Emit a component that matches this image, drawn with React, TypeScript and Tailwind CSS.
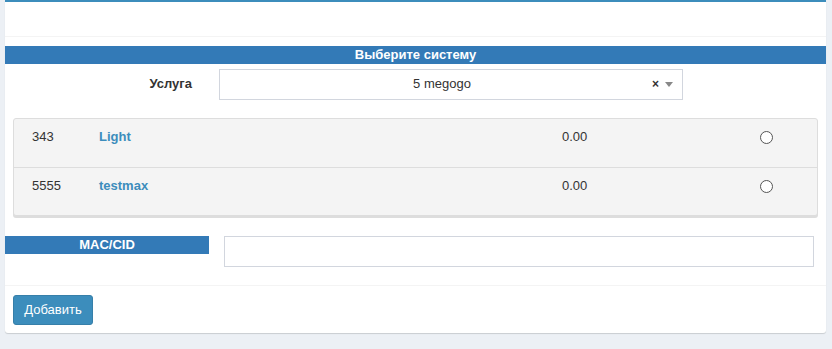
const rows = [
  { id: "343", name: "Light", price: "0.00" },
  { id: "5555", name: "testmax", price: "0.00" },
];

export default function App() {
  return (
    <div className="min-h-[349px] bg-[#ecf0f5] pl-[5px] pr-[6px] font-['Liberation_Sans',Arial,sans-serif] text-[13px] text-[#333]">
      <div className="bg-white border-t-2 border-[#3c8dbc] rounded-b-[3px] shadow-[0_1px_1px_rgba(0,0,0,0.15)]">
        <div className="h-[35px] border-b border-[#f4f4f4]" />

        <div className="pt-[9px]">
          <div className="h-[18px] bg-[#337ab7] text-white font-bold text-center leading-[18px]">
            Выберите систему
          </div>

          <div className="flex items-center mt-[5px] h-[30px]">
            <div className="w-[187px] text-right font-bold">Услуга</div>
            <div className="ml-[27px] w-[464px] h-[31px] border border-[#d2d6de] flex items-center">
              <span className="flex-1 text-center pl-[12px]">5 megogo</span>
              <span className="font-bold text-[12px] mr-[6px] leading-none">×</span>
              <span className="mr-[9px] w-0 h-0 border-l-4 border-r-4 border-t-[5px] border-l-transparent border-r-transparent border-t-[#888]" />
            </div>
          </div>

          <div className="mx-[8px] mt-[19px] bg-[#f4f4f4] border border-[#ddd] rounded-[3px] shadow-[0_2px_0_#ddd]">
            {rows.map((r, i) => (
              <div
                key={r.id}
                className={`flex h-[48px] pt-[8px] ${i > 0 ? "border-t border-[#ddd]" : ""}`}
              >
                <div className="w-[85px] pl-[18px]">{r.id}</div>
                <div className="w-[463px] font-bold text-[#3c8dbc]">{r.name}</div>
                <div className="w-[198px]">{r.price}</div>
                <div className="pt-[4px]">
                  <span className="block w-[13px] h-[13px] rounded-full border border-[#555] bg-white" />
                </div>
              </div>
            ))}
          </div>

          <div className="flex mt-[20px]">
            <div className="w-[204px] h-[18px] bg-[#337ab7] text-white font-bold text-center leading-[18px]">
              MAC/CID
            </div>
            <div className="ml-[15px] w-[590px] h-[31px] border border-[#d2d6de]" />
          </div>
        </div>

        <div className="mt-[18px] border-t border-[#f4f4f4] px-[8px] pt-[9px] pb-[8px]">
          <button className="h-[30px] w-[80px] bg-[#3c8dbc] border border-[#367fa9] rounded-[3px] text-white text-[13px]">
            Добавить
          </button>
        </div>
      </div>
    </div>
  );
}
